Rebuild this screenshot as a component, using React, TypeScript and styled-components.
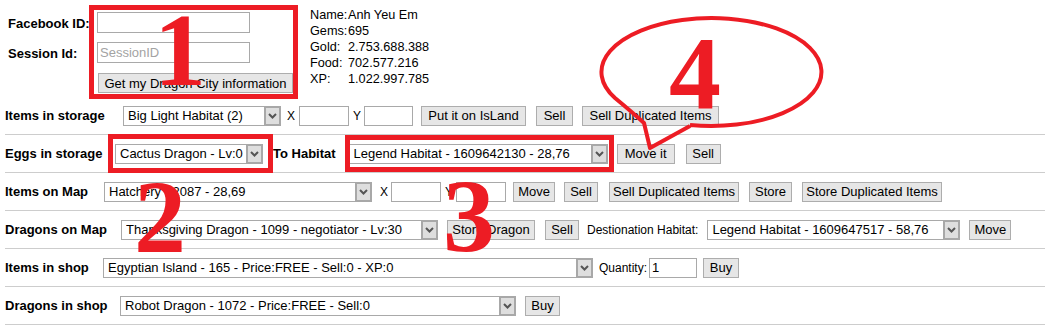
import React from 'react';
import styled, { createGlobalStyle } from 'styled-components';

const GlobalStyle = createGlobalStyle`
  html, body {
    margin: 0;
    padding: 0;
    background: #fff;
  }
  body {
    font-family: 'Liberation Sans', Arial, sans-serif;
    color: #000;
  }
`;

const Page = styled.div`
  position: relative;
  width: 1045px;
  height: 326px;
  overflow: hidden;
`;

const Top = styled.div`
  display: flex;
  align-items: flex-start;
  height: 97px;
`;

const LoginForm = styled.div`
  display: grid;
  grid-template-columns: 89px 195px;
  grid-template-rows: 21px 21px 21px;
  row-gap: 9px;
  align-items: center;
  padding: 12px 0 0 8px;
`;

const FormLabel = styled.label`
  font-size: 13px;
  font-weight: bold;
  padding-top: 2px;
`;

const FormInput = styled.input`
  width: 153px;
  height: 21px;
  box-sizing: border-box;
  border: 1px solid #a9a9a9;
  padding: 0 2px;
  font-family: 'Liberation Sans', Arial, sans-serif;
  font-size: 13px;
  outline: none;

  &::placeholder {
    color: #a3a3a3;
  }
`;

const InfoTable = styled.div`
  display: grid;
  grid-template-columns: 38px auto;
  margin: 7px 0 0 18px;
  font-size: 12.7px;
  line-height: 16px;
`;

const Rows = styled.div`
  margin-left: 5px;
`;

const Row = styled.div`
  display: flex;
  align-items: center;
  height: 37px;
  border-bottom: 1px solid #cdcdcd;
  white-space: nowrap;
`;

const RowLabel = styled.span<{ $w: number }>`
  flex-shrink: 0;
  width: ${({ $w }) => $w}px;
  font-size: 13px;
  font-weight: bold;
`;

const Inline = styled.span<{ $ml?: number; $bold?: boolean }>`
  flex-shrink: 0;
  margin-left: ${({ $ml = 0 }) => $ml}px;
  font-size: ${({ $bold }) => ($bold ? 13 : 12)}px;
  font-weight: ${({ $bold }) => ($bold ? 'bold' : 'normal')};
`;

const SelectWrap = styled.div<{ $w: number; $ml?: number }>`
  position: relative;
  flex-shrink: 0;
  width: ${({ $w }) => $w}px;
  height: 20px;
  margin-left: ${({ $ml = 0 }) => $ml}px;
`;

const NativeSelect = styled.select`
  appearance: none;
  width: 100%;
  height: 100%;
  box-sizing: border-box;
  border: 1px solid #a9a9a9;
  border-radius: 0;
  background: #fff;
  padding: 0 18px 0 4px;
  margin: 0;
  font-family: 'Liberation Sans', Arial, sans-serif;
  font-size: 13px;
  color: #000;
  outline: none;
`;

const SelectArrow = styled.span`
  position: absolute;
  top: 0;
  right: 0;
  bottom: 0;
  width: 17px;
  box-sizing: border-box;
  border: 2px solid #a8a8a8;
  background: #dedede;
  display: flex;
  align-items: center;
  justify-content: center;
  pointer-events: none;
`;

const TextInput = styled.input<{ $w: number; $ml?: number }>`
  flex-shrink: 0;
  width: ${({ $w }) => $w}px;
  height: 20px;
  box-sizing: border-box;
  margin: 0 0 0 ${({ $ml = 0 }) => $ml}px;
  border: 1px solid #a9a9a9;
  padding: 0 2px;
  font-family: 'Liberation Sans', Arial, sans-serif;
  font-size: 13px;
  outline: none;
`;

const Button = styled.button<{ $w: number; $ml?: number }>`
  flex-shrink: 0;
  width: ${({ $w }) => $w}px;
  height: 20px;
  box-sizing: border-box;
  margin: 0 0 0 ${({ $ml = 0 }) => $ml}px;
  padding: 0;
  border: 1px solid #adadad;
  border-radius: 0;
  background: #e6e6e6;
  font-family: 'Liberation Sans', Arial, sans-serif;
  font-size: 13px;
  color: #000;
  white-space: nowrap;
`;

const FetchButton = styled(Button)`
  align-self: end;
  justify-self: start;
  margin-left: 1px;
`;

const Overlay = styled.svg`
  position: absolute;
  top: 0;
  left: 0;
  pointer-events: none;
`;

const RED = '#ed1c24';

const Select: React.FC<{ w: number; ml?: number; value: string }> = ({ w, ml, value }) => (
  <SelectWrap $w={w} $ml={ml}>
    <NativeSelect defaultValue={value}>
      <option>{value}</option>
    </NativeSelect>
    <SelectArrow>
      <svg width="9" height="6" viewBox="0 0 9 6">
        <path d="M1 1 L4.5 4.5 L8 1" stroke="#555" strokeWidth="2" fill="none" />
      </svg>
    </SelectArrow>
  </SelectWrap>
);

const info: [string, string][] = [
  ['Name:', 'Anh Yeu Em'],
  ['Gems:', '695'],
  ['Gold:', '2.753.688.388'],
  ['Food:', '702.577.216'],
  ['XP:', '1.022.997.785'],
];

const Annotations = () => (
  <Overlay width={1045} height={326}>
    <g fill="none" stroke={RED} strokeWidth={5}>
      <rect x={91.5} y={7.5} width={204} height={89} />
      <rect x={110.5} y={136.5} width={160} height={34} />
      <rect x={347.5} y={137.5} width={264} height={32} />
    </g>
    <path
      d="M690 125 A110 54 0 1 0 615 98 Q632 112 644 123 L650 148 L690 126"
      fill="none"
      stroke={RED}
      strokeWidth={4}
      strokeLinejoin="round"
    />
    <g
      fill={RED}
      fontFamily="'Liberation Serif', 'Times New Roman', serif"
      fontWeight="bold"
      fontSize={104}
      textAnchor="middle"
    >
      <text x={180} y={85}>1</text>
      <text x={160} y={252}>2</text>
      <text x={469} y={251}>3</text>
      <text x={695} y={108}>4</text>
    </g>
  </Overlay>
);

export default function App() {
  return (
    <Page>
      <GlobalStyle />
      <Top>
        <LoginForm>
          <FormLabel>Facebook ID:</FormLabel>
          <FormInput />
          <FormLabel>Session Id:</FormLabel>
          <FormInput placeholder="SessionID" />
          <span />
          <FetchButton $w={195}>Get my Dragon City information</FetchButton>
        </LoginForm>
        <InfoTable>
          {info.map(([k, v]) => (
            <React.Fragment key={k}>
              <span>{k}</span>
              <span>{v}</span>
            </React.Fragment>
          ))}
        </InfoTable>
      </Top>

      <Rows>
        <Row>
          <RowLabel $w={118}>Items in storage</RowLabel>
          <Select w={158} value="Big Light Habitat (2)" />
          <Inline $ml={6}>X</Inline>
          <TextInput $w={50} $ml={4} />
          <Inline $ml={4}>Y</Inline>
          <TextInput $w={49} $ml={3} />
          <Button $w={105} $ml={8}>Put it on IsLand</Button>
          <Button $w={37} $ml={10}>Sell</Button>
          <Button $w={137} $ml={9}>Sell Duplicated Items</Button>
        </Row>
        <Row>
          <RowLabel $w={110}>Eggs in storage</RowLabel>
          <Select w={148} value="Cactus Dragon - Lv:0" />
          <Inline $ml={10} $bold>To Habitat</Inline>
          <Select w={259} ml={13} value="Legend Habitat - 1609642130 - 28,76" />
          <Button $w={58} $ml={9}>Move it</Button>
          <Button $w={35} $ml={11}>Sell</Button>
        </Row>
        <Row>
          <RowLabel $w={99}>Items on Map</RowLabel>
          <Select w={268} value="Hatchery - 2087 - 28,69" />
          <Inline $ml={8}>X</Inline>
          <TextInput $w={50} $ml={3} />
          <Inline $ml={4}>Y</Inline>
          <TextInput $w={50} $ml={3} />
          <Button $w={42} $ml={7}>Move</Button>
          <Button $w={34} $ml={9}>Sell</Button>
          <Button $w={130} $ml={11}>Sell Duplicated Items</Button>
          <Button $w={43} $ml={10}>Store</Button>
          <Button $w={140} $ml={10}>Store Duplicated Items</Button>
        </Row>
        <Row>
          <RowLabel $w={116}>Dragons on Map</RowLabel>
          <Select w={317} value="Thanksgiving Dragon - 1099 - negotiator - Lv:30" />
          <Button $w={88} $ml={9}>Store Dragon</Button>
          <Button $w={34} $ml={10}>Sell</Button>
          <Inline $ml={8}>Destionation Habitat:</Inline>
          <Select w={253} ml={9} value="Legend Habitat - 1609647517 - 58,76" />
          <Button $w={42} $ml={9}>Move</Button>
        </Row>
        <Row>
          <RowLabel $w={98}>Items in shop</RowLabel>
          <Select w={490} value="Egyptian Island - 165 - Price:FREE - Sell:0 - XP:0" />
          <Inline $ml={6}>Quantity:</Inline>
          <TextInput $w={48} $ml={2} defaultValue="1" />
          <Button $w={36} $ml={6}>Buy</Button>
        </Row>
        <Row>
          <RowLabel $w={115}>Dragons in shop</RowLabel>
          <Select w={396} value="Robot Dragon - 1072 - Price:FREE - Sell:0" />
          <Button $w={35} $ml={9}>Buy</Button>
        </Row>
      </Rows>

      <Annotations />
    </Page>
  );
}
